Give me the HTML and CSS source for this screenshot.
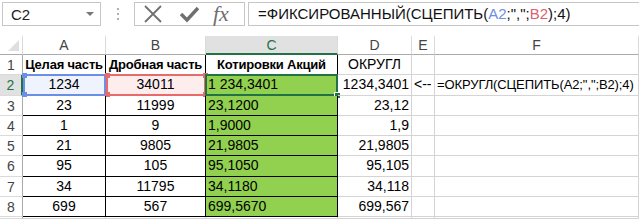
FILE: index.html
```html
<!DOCTYPE html>
<html lang="ru">
<head>
<meta charset="UTF-8">
<title>ФИКСИРОВАННЫЙ</title>
<link rel="stylesheet" href="styles.css">
</head>
<body>

<div class="formula-bar">
    <div class="name-box">
        <span class="cell-name">C2</span>
        <span class="drop-arrow"></span>
    </div>
    <div class="grip"><i></i><i></i><i></i></div>
    <div class="fx-buttons">
        <svg class="fx-icon" width="22" height="22" viewBox="0 0 22 22">
            <path d="M3 3 L19 19 M19 3 L3 19" stroke="#707070" stroke-width="1.8" fill="none"/>
        </svg>
        <svg class="fx-icon" width="22" height="22" viewBox="0 0 22 22">
            <path d="M3 11 L9 17 L20 5" stroke="#6f6f6f" stroke-width="3.4" fill="none"/>
        </svg>
        <span class="fx-text">fx</span>
    </div>
    <div class="formula-input">=ФИКСИРОВАННЫЙ(СЦЕПИТЬ(<span class="ref-a">A2</span>;",";<span class="ref-b">B2</span>);4)</div>
</div>

<div class="sheet">
    <div class="hdr corner"><span class="corner-tri"></span></div>
    <div class="hdr">A</div>
    <div class="hdr">B</div>
    <div class="hdr hdr-active">C</div>
    <div class="hdr">D</div>
    <div class="hdr">E</div>
    <div class="hdr">F</div>

    <div class="rownum">1</div>
    <div class="cell tb center bold">Целая часть</div>
    <div class="cell tb center bold">Дробная часть</div>
    <div class="cell tb center bold">Котировки Акций</div>
    <div class="cell center">ОКРУГЛ</div>
    <div class="cell"></div>
    <div class="cell"></div>

    <div class="rownum rownum-active">2</div>
    <div class="cell tb center ref-cell-a">1234<span class="ref-box box-a"><b class="sq tl"></b><b class="sq bl"></b></span></div>
    <div class="cell tb center ref-cell-b">34011<span class="ref-box box-b"><b class="sq tl"></b><b class="sq tr"></b><b class="sq bl"></b><b class="sq br"></b></span></div>
    <div class="cell tb green">1 234,3401<span class="sel-box"><b class="handle"></b></span></div>
    <div class="cell right">1234,3401</div>
    <div class="cell">&lt;--</div>
    <div class="cell overflow">=ОКРУГЛ(СЦЕПИТЬ(A2;",";B2);4)</div>

    <div class="rownum">3</div>
    <div class="cell tb center">23</div>
    <div class="cell tb center">11999</div>
    <div class="cell tb green">23,1200</div>
    <div class="cell right">23,12</div>
    <div class="cell"></div>
    <div class="cell"></div>

    <div class="rownum">4</div>
    <div class="cell tb center">1</div>
    <div class="cell tb center">9</div>
    <div class="cell tb green">1,9000</div>
    <div class="cell right">1,9</div>
    <div class="cell"></div>
    <div class="cell"></div>

    <div class="rownum">5</div>
    <div class="cell tb center">21</div>
    <div class="cell tb center">9805</div>
    <div class="cell tb green">21,9805</div>
    <div class="cell right">21,9805</div>
    <div class="cell"></div>
    <div class="cell"></div>

    <div class="rownum">6</div>
    <div class="cell tb center">95</div>
    <div class="cell tb center">105</div>
    <div class="cell tb green">95,1050</div>
    <div class="cell right">95,105</div>
    <div class="cell"></div>
    <div class="cell"></div>

    <div class="rownum">7</div>
    <div class="cell tb center">34</div>
    <div class="cell tb center">11795</div>
    <div class="cell tb green">34,1180</div>
    <div class="cell right">34,118</div>
    <div class="cell"></div>
    <div class="cell"></div>

    <div class="rownum">8</div>
    <div class="cell tb center">699</div>
    <div class="cell tb center">567</div>
    <div class="cell tb green">699,5670</div>
    <div class="cell right">699,567</div>
    <div class="cell"></div>
    <div class="cell"></div>

    <div class="rownum"></div>
    <div class="cell"></div>
    <div class="cell"></div>
    <div class="cell"></div>
    <div class="cell"></div>
    <div class="cell"></div>
    <div class="cell"></div>
</div>

</body>
</html>
```

FILE: styles.css
```css
body {
    margin: 0;
    background-color: #fff;
    font-family: "Liberation Sans", Arial, sans-serif;
    color: #000;
    overflow: hidden;
}
.formula-bar {
    display: flex;
    align-items: flex-start;
    height: 36px;
    padding-top: 2px;
    padding-left: 2px;
    box-sizing: border-box;
}
.name-box {
    width: 99px;
    height: 24px;
    box-sizing: border-box;
    border: 1px solid #c6c6c6;
    display: flex;
    align-items: center;
    justify-content: space-between;
    padding: 0 6px 0 8px;
}
.cell-name {
    font-size: 15px;
    color: #222;
}
.drop-arrow {
    width: 0;
    height: 0;
    border-left: 4px solid transparent;
    border-right: 4px solid transparent;
    border-top: 4px solid #777;
}
.grip {
    width: 33px;
    height: 24px;
    display: flex;
    flex-direction: column;
    align-items: center;
    justify-content: center;
    gap: 3px;
}
.grip i {
    display: block;
    width: 2px;
    height: 2px;
    background-color: #b0b0b0;
}
.fx-buttons {
    width: 111px;
    height: 24px;
    box-sizing: border-box;
    border: 1px solid #c6c6c6;
    display: flex;
    align-items: center;
    padding-left: 7px;
    gap: 14px;
}
.fx-text {
    font-family: "Liberation Serif", "Times New Roman", serif;
    font-style: italic;
    font-size: 22px;
    line-height: 22px;
    color: #6f6f6f;
    margin-left: -1px;
}
.formula-input {
    flex: 1;
    height: 24px;
    box-sizing: border-box;
    border: 1px solid #c6c6c6;
    border-right: none;
    margin-left: 3px;
    padding-left: 9px;
    font-size: 15px;
    line-height: 22px;
    white-space: nowrap;
    color: #111;
}
.ref-a {
    color: #6b8fe6;
}
.ref-b {
    color: #e0606e;
}

.sheet {
    display: grid;
    grid-template-columns: 23px 83px 100px 132px 74px 23px 1fr;
    grid-template-rows: 19px repeat(8, 20.3px) 2px;
    font-size: 13px;
}
.hdr {
    box-sizing: border-box;
    border-right: 1px solid #dadada;
    border-bottom: 1px solid #ababab;
    text-align: center;
    line-height: 18px;
    color: #444;
    font-size: 14px;
    background-color: #fff;
}
.hdr-active {
    background-color: #e1e1e1;
    color: #217346;
    border-bottom: 2px solid #217346;
}
.corner {
    position: relative;
}
.corner-tri {
    position: absolute;
    right: 3px;
    bottom: 3px;
    width: 0;
    height: 0;
    border-left: 11px solid transparent;
    border-bottom: 11px solid #dfdfdf;
}
.rownum {
    box-sizing: border-box;
    border-right: 1px solid #ababab;
    border-bottom: 1px solid #dadada;
    text-align: center;
    line-height: 20px;
    color: #444;
    font-size: 14px;
}
.rownum-active {
    background-color: #e1e1e1;
    color: #217346;
    border-right: 2px solid #217346;
}
.cell {
    position: relative;
    box-sizing: border-box;
    border-right: 1px solid #d4d4d4;
    border-bottom: 1px solid #d4d4d4;
    line-height: 19px;
    padding: 0 2px;
    white-space: nowrap;
    font-size: 14px;
}
.tb {
    border-right-color: #000;
    border-bottom-color: #000;
}
.center {
    text-align: center;
}
.right {
    text-align: right;
}
.bold {
    font-weight: bold;
    font-size: 13px;
    letter-spacing: -0.2px;
}
.green {
    background-color: #92d050;
}
.overflow {
    overflow: visible;
    font-size: 13px;
    letter-spacing: -0.1px;
}
.ref-cell-a {
    background-color: #eef3fd;
}
.ref-cell-b {
    background-color: #fdeded;
}
.ref-box {
    position: absolute;
    left: 0;
    top: -1px;
    right: -1px;
    bottom: -1px;
    border: 2px solid;
}
.box-a {
    border-color: #6b8fe6;
}
.box-b {
    border-color: #e86a6a;
}
.box-b .sq {
    background-color: #e86a6a;
}
.box-a .sq {
    background-color: #6b8fe6;
}
.sq {
    position: absolute;
    width: 5px;
    height: 5px;
}
.tl { left: -3px; top: -3px; }
.tr { right: -4px; top: -3px; }
.bl { left: -3px; bottom: -3px; }
.br { right: -4px; bottom: -3px; }
.sel-box {
    position: absolute;
    left: -1px;
    top: -1px;
    right: -1px;
    bottom: -1px;
    border: 2px solid #217346;
}
.handle {
    position: absolute;
    right: -5px;
    bottom: -5px;
    width: 5px;
    height: 5px;
    background-color: #217346;
    border: 1px solid #fff;
}
```
